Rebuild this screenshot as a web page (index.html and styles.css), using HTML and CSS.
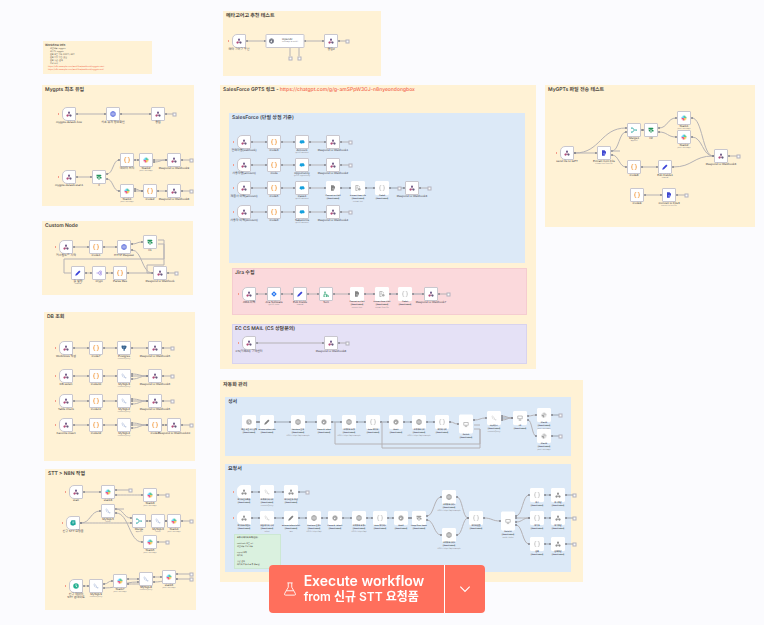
FILE: index.html
```
<!DOCTYPE html>
<html lang="ko">
<head>
<meta charset="utf-8">
<title>Workflow</title>
<link rel="stylesheet" href="styles.css">
</head>
<body>
<svg class="sprite" aria-hidden="true">
  <symbol id="webhook" viewBox="0 0 24 24"><path d="M12 6 7 17M12 6l5 11M7 18h10" stroke="#95557b" stroke-width="2" fill="none"/><circle cx="12" cy="6" r="4" fill="#6b5b88"/><circle cx="6" cy="18" r="4.500" fill="#b34b79"/><circle cx="18" cy="18" r="4.500" fill="#645a7d"/></symbol>
  <symbol id="code" viewBox="0 0 24 24"><path d="M9 1H7Q4 1 4 6v3q0 3-3 3 3 0 3 3v3q0 5 3 5h2M15 1h2q3 0 3 5v3q0 3 3 3-3 0-3 3v3q0 5-3 5h-2" stroke="#f0922c" stroke-width="3" fill="none"/></symbol>
  <symbol id="http" viewBox="0 0 24 24"><g fill="none" stroke="#4c5fd9" stroke-width="2.500"><circle cx="12" cy="12" r="10"/><ellipse cx="12" cy="12" rx="4.500" ry="10"/><path d="M3 8h18M3 16h18"/></g></symbol>
  <symbol id="slack" viewBox="0 0 24 24"><g stroke-width="4.500" stroke-linecap="round"><path d="M9 4v6" stroke="#36c5f0"/><path d="M4 9h1" stroke="#36c5f0"/><path d="M14 9h6M15 4v1" stroke="#2eb67d"/><path d="M15 14v6M20 15h-1" stroke="#ecb22e"/><path d="M4 15h6M9 20v-1" stroke="#e01e5a"/></g></symbol>
  <symbol id="if" viewBox="0 0 24 24"><path d="M2 3h17l3 3-3 4H2zM22 12H5l-3 3 3 3h17zM10 10h4v13h-4z" fill="#23935a"/></symbol>
  <symbol id="mysql" viewBox="0 0 24 24"><path d="M3 5q4-3 7 2l4 8q3 4 7 4l-4 2M4 6l3 9 3 2M14 15l1 5" fill="none" stroke="#7b93c4" stroke-width="1.500"/></symbol>
  <symbol id="postgres" viewBox="0 0 24 24"><path d="M2 3q5-2 9 0 6-2 11 1 1 5-3 11l-4 1v7h-5v-8l-4 1Q1 10 2 3z" fill="#2f5e8c"/><path d="M9 6v6l3 2M15 6v6" stroke="#fff" fill="none"/></symbol>
  <symbol id="salesforce" viewBox="0 0 24 24"><path d="M4 9a5 5 0 0 1 8-3 5 5 0 0 1 8 2 5 5 0 0 1-1 9h-6a5 5 0 0 1-7 0 5 5 0 0 1-2-8z" fill="#16a0dd"/></symbol>
  <symbol id="jira" viewBox="0 0 24 24"><path d="m12 1 11 11-11 11L1 12z" fill="#2878f0"/><path d="m12 8 4 4-4 4-4-4z" fill="#fff"/></symbol>
  <symbol id="edit" viewBox="0 0 24 24"><path d="m1 23 2-7L17 2l5 5L8 21z" fill="#3a42d8"/></symbol>
  <symbol id="merge" viewBox="0 0 24 24"><path d="M2 4h5l6 8h9M2 20h5l6-8" fill="none" stroke="#2aa5a0" stroke-width="3"/><circle cx="3" cy="4" r="2.500" fill="#2aa5a0"/><circle cx="3" cy="20" r="2.500" fill="#2aa5a0"/><circle cx="21" cy="12" r="2.500" fill="#2aa5a0"/></symbol>
  <symbol id="file" viewBox="0 0 24 24"><path d="M4 1h10l6 6v7h-5v9H4z" fill="#3f48cf"/><path d="M8 12h6v-3l6 6-6 6v-3H8z" fill="#6f77e6"/></symbol>
  <symbol id="filter" viewBox="0 0 24 24"><path d="M3 2h10l4 4v4M3 2v20h7M6 8h6M6 12h5M6 16h4" fill="none" stroke="#777" stroke-width="2.500"/><circle cx="17" cy="17" r="5" fill="#888"/></symbol>
  <symbol id="switch" viewBox="0 0 24 24"><path d="M2 12h7M9 12l6-8h6v16h-6z" fill="none" stroke="#8d78df" stroke-width="2.500"/><circle cx="17" cy="12" r="3" fill="#8d78df"/></symbol>
  <symbol id="screen" viewBox="0 0 24 24"><path d="M3 4h18v11H3zM7 21h10M12 15v6" fill="none" stroke="#777" stroke-width="2.500"/></symbol>
  <symbol id="agent" viewBox="0 0 24 24"><path d="M8 8v5H4v8M8 13h6v8M14 16h6v5" fill="none" stroke="#26a06e" stroke-width="2.500"/><circle cx="8" cy="5" r="3" fill="#26a06e"/><path d="M2 19h5v4H2zM11 19h5v4h-5zM18 19h5v4h-5z" fill="#26a06e"/></symbol>
  <symbol id="chat" viewBox="0 0 24 24"><path d="M6 1h15l2 17-11 5-9-3-2-9z" fill="#1ca69a"/><path d="M9 8h9M9 12h7" stroke="#fff" stroke-width="2"/></symbol>
  <symbol id="clock" viewBox="0 0 24 24"><circle cx="12" cy="12" r="11" fill="#23b08f"/><path d="M12 5v8l5 3" fill="none" stroke="#fff" stroke-width="3"/></symbol>
  <symbol id="openai" viewBox="0 0 24 24"><g fill="none" stroke="#4c5060" stroke-width="2.500"><circle cx="12" cy="12" r="9"/><path d="m7 7 10 3v7l-5 3-6-4zM6 13l6-8 6 4-5 10"/></g></symbol>
</svg>

<main class="canvas" id="canvas"></main>

<div class="run-bar">
  <div class="run-group">
    <button class="run-main" type="button">
      <svg class="flask" viewBox="0 0 16 16" aria-hidden="true"><path d="M5 1h6M6 1v5L2 13q-1 2 1 2h10q2 0 1-2L10 6V1M4 10h8"/></svg>
      <span class="run-text"><span class="run-title">Execute workflow</span><span class="run-source">from 신규 STT 요청품</span></span>
    </button>
    <button class="run-more" type="button" aria-label="Choose trigger">
      <svg class="chevron" viewBox="0 0 12 12" aria-hidden="true"><path d="m2 4 4 4 4-4"/></svg>
    </button>
  </div>
</div>
<script src="canvas.js"></script>
</body>
</html>
```
FILE: styles.css
```
* { box-sizing: border-box; }
body {
  margin: 0;
  background: #fbfbfe;
  font-family: Inter, "Noto Sans CJK KR", sans-serif;
  text-rendering: geometricPrecision;
}
.sprite { display: none; }
.canvas { position: relative; height: 100vh; overflow: hidden; }

.note {
  position: absolute;
  padding: 2px 3px;
  background: #fff2d5;
  color: #4a453d;
  font-size: 5px;
  line-height: 7px;
}
.note h2 { margin: 0; font-size: 5px; font-weight: 600; white-space: nowrap; }
.note a { color: #f2694f; font-weight: 500; text-decoration: none; }
.note.blue { background: #dce9f7; color: #3f4854; }
.note.pink { background: #fbd9dc; border: 1px solid #f5ccd0; padding: 1px 2px; }
.note.purple { background: #e5e1f6; border: 1px solid #d8d3ee; padding: 1px 2px; }
.note.green { background: #daf1df; border: 1px solid #cce8d3; padding: 1px 2px; }
.note.info, .note.green { font-size: 2px; line-height: 3px; }
.note.info { padding: 2px; }
.note.info h2, .note.green h2 { font-size: 3px; line-height: 4px; }
.note.green h2 { font-size: 2px; }
.note ul { margin: 0; padding: 1px 0 0 5px; }
.note p { margin: 3px 0 0; white-space: nowrap; }
.note .links { display: grid; margin: 0 0 0 3px; }

.edges { position: absolute; width: 100%; height: 100%; overflow: visible; fill: none; stroke: #b5b2b5; stroke-width: 1; }
.edges .faint { stroke: #9ba4af; }
.edges .dot { fill: #85868e; stroke: none; }
.edges .end { fill: #fafafa; stroke: #b3b2bd; }

.node {
  position: absolute;
  display: grid;
  place-items: center;
  width: 14px;
  height: 14px;
  border: 1px solid #c9c7ce;
  border-radius: 1px;
  background: #fff;
  transform: translate(-50%, -50%);
}
.node .icon { width: 6px; height: 6px; }
.node.trigger { border-radius: 5px 1px 1px 5px; }
.node.trigger::before { content: ""; position: absolute; left: -5px; width: 1px; height: 2px; background: #f49a88; }
.node.off { border-color: #fff; }
.node.off .icon { filter: grayscale(1); opacity: .7; }
.node.tall { height: 19px; }
.node.wide { width: 39px; grid-template-columns: 10px 1fr; }
.node.wide .label { position: static; margin: 0; transform: none; text-align: left; }
.label {
  position: absolute;
  top: 100%;
  left: 50%;
  margin-top: 1px;
  transform: translateX(-50%);
  color: #45434a;
  font: 3px/3px "Liberation Sans", "Noto Sans CJK KR", sans-serif;
  text-align: center;
  white-space: nowrap;
}
.off .label { font-size: 2px; font-weight: 700; color: #4c515b; }
.label span { display: block; }
.label .sub { color: #8d8b91; font-size: 2px; font-weight: 400; }

.run-bar {
  position: fixed;
  inset: auto 0 12px 0;
  display: flex;
  justify-content: center;
  padding-right: 10px;
  pointer-events: none;
}
.run-group { display: flex; gap: 1px; border-radius: 4px; overflow: hidden; background: #fff; pointer-events: auto; }
.run-group button { height: 48px; border: 0; background: #ff6f5c; color: #fff; font-family: inherit; }
.run-main { display: flex; align-items: center; gap: 7px; padding: 0 20px 0 14px; }
.run-more { display: grid; place-items: center; width: 40px; padding: 0; }
.run-text { display: grid; text-align: left; font-weight: 600; line-height: 16px; }
.run-title { font-size: 14px; }
.run-source { font-size: 12px; }
.flask { width: 14px; height: 16px; fill: none; stroke: #fff; stroke-width: 1; }
.chevron { width: 14px; height: 14px; fill: none; stroke: #fff; stroke-width: 1; }
```
FILE: canvas.js
```
const notes = [
  [43, 41, 109, 33, 'info', '<h2>Workflow Info</h2><ul><li>작업내용: mygpts</li><li>작성자: mygpts</li><li>웹훅 호출 방식: POST / GET</li><li>웹훅 인증 방법: 없음</li><li>웹훅 응답: 결과</li><li>관련 문서</li></ul><div class="links"><a href="#">https://n8n.example.com/workflow/webhook/mygpts-start</a><a href="#">https://n8n.example.com/workflow/webhook/mygpts-end</a></div>'],
  [42, 85, 152, 121, '', '<h2>Mygpts 최초 유입</h2>'],
  [42, 221, 151, 74, '', '<h2>Custom Node</h2>'],
  [44, 312, 151, 149, '', '<h2>DB 조회</h2>'],
  [45, 469, 151, 141, '', '<h2>STT &gt; N8N 작업</h2>'],
  [223, 11, 158, 65, '', '<h2>메타고어고 추천 테스트</h2>'],
  [220, 85, 316, 284, '', '<h2>SalesForce GPTS 링크 - <a href="#">https://chatgpt.com/g/g-amSPpW3GJ-n8nyeondongbox</a></h2>'],
  [229, 113, 296, 150, 'blue', '<h2>SalesForce (단월 상점 기준)</h2>'],
  [232, 268, 295, 47, 'pink', '<h2>Jira 수집</h2>'],
  [232, 324, 295, 40, 'purple', '<h2>EC CS MAIL (CS 상담문의)</h2>'],
  [545, 85, 210, 142, '', '<h2>MyGPTs 파일 전송 테스트</h2>'],
  [220, 380, 363, 202, '', '<h2>자동화 관리</h2>'],
  [225, 397, 346, 59, 'blue', '<h2>성서</h2>'],
  [225, 464, 346, 108, 'blue', '<h2>요청서</h2>'],
  [234, 534, 47, 35, 'green', '<h2>요청서 데이터 조회(신규)</h2><p>webhook 호출 url<br>작업내용 관련 내용</p><p>mysql 조회<br>데이터</p><p>응답 결과<br>데이터 전송 완료 후 종료됨</p>'],
];

// Each row: y, nodes [icon, x, label, sub, classes], x of the closing "+" box.
const rows = [
  [114, [['webhook', 69, 'mygpts-default-flow', '', 'trigger'], ['http', 113, '최초 유저 정보확인'], ['webhook', 158, '응답']], 174],
  [160, [['code', 127, '데이터 처리'], ['slack', 146, 'Slack2', 'post: message'], ['webhook', 174, 'Respond to Webhook9']], 191],
  [177, [['webhook', 69, 'mygpts-default-start1', '', 'trigger'], ['if', 99, 'If']]],
  [191, [['slack', 127, 'Slack1', 'post: message'], ['code', 150, 'Code2'], ['webhook', 174, 'Respond to Webhook8']], 191],
  [247, [['webhook', 66, '커스텀노드 시작', '', 'trigger'], ['code', 96, 'Code1'], ['http', 124, 'HTTP Request']]],
  [242, [['if', 150, 'If1']]],
  [273, [['edit', 78, '값 설정', 'manual'], ['switch', 99, 'Crypt'], ['code', 120, 'Parse Res'], ['webhook', 160, 'Respond to Webhook']], 176],
  [348, [['webhook', 66, 'Workflows 작업', '', 'trigger'], ['code', 96, 'Code7'], ['postgres', 124, 'Postgres', 'executeQuery'], ['webhook', 155, 'Respond to Webhook5']], 172],
  [376, [['webhook', 66, 'DB select', '', 'trigger'], ['code', 96, 'Code10'], ['mysql', 124, 'MySQL3', 'executeQuery'], ['webhook', 155, 'Respond to Webhook6']], 172],
  [401, [['webhook', 66, 'Table check', '', 'trigger'], ['code', 96, 'Code11'], ['mysql', 124, 'MySQL2', 'executeQuery'], ['webhook', 155, 'Respond to Webhook5']], 172],
  [425, [['webhook', 66, 'Favorite insert', '', 'trigger'], ['code', 96, 'Code12'], ['mysql', 124, 'MySQL4', 'executeQuery'], ['code', 155, 'Code7'], ['webhook', 174, 'Respond to Webhook10']], 191],
  [492, [['webhook', 76, 'start', '', 'trigger'], ['slack', 108, 'slack3']]],
  [495, [['slack', 150, 'Slack3', 'post: message']], 167],
  [511, [['mysql', 108, 'MySQL5', 'select']]],
  [523, [['chat', 73, '신규 STT 요청품', '', 'trigger']]],
  [521, [['merge', 139, 'Merge', 'append'], ['mysql', 158, 'MySQL6', 'select'], ['slack', 174, 'Slack4', 'post: message']], 191],
  [542, [['slack', 150, 'Slack5', 'post: message']], 167],
  [586, [['clock', 76, '신규 데이터<br>STT 업데이트', '', 'trigger'], ['mysql', 96, 'MySQL9', 'executeQuery']]],
  [581, [['slack', 120, 'Slack7', 'post: message']]],
  [579, [['mysql', 146, 'MySQL8', 'executeQuery']]],
  [577, [['slack', 169, 'slack6', 'post: message']]],
  [41, [['webhook', 239, '메타 고어고 추천', '', 'trigger'], ['openai', 285, 'OpenAI', 'message a model', 'wide'], ['webhook', 331, '응답2']], 347],
  [142, [['webhook', 244, '판매자명(webhook)', '', 'trigger'], ['code', 274, 'Code3'], ['salesforce', 302, 'Account', 'getAll: account'], ['webhook', 333, 'Respond to Webhook1']], 350],
  [165, [['webhook', 244, '사용자명(account)', '', 'trigger'], ['code', 274, 'Code'], ['salesforce', 302, 'Opportunity', 'getAll: opportunity'], ['webhook', 333, 'Respond to Webhook2']], 350],
  [188, [['webhook', 244, '제품사 이력(account)', '', 'trigger'], ['code', 274, 'Code5'], ['salesforce', 302, 'Case1', 'getAll: account'], ['file', 333, 'Convert to File2', '', 'off'], ['filter', 358, 'Extract from File', 'extract text', 'off'], ['code', 382, 'Code8', '', 'off'], ['webhook', 412, 'Respond to Webhook3']], 429],
  [212, [['webhook', 244, '사용자 이력(Account)', '', 'trigger'], ['code', 274, 'Code6'], ['salesforce', 302, 'Salesforce', 'getAll: account'], ['webhook', 333, 'Respond to Webhook4']], 350],
  [294, [['webhook', 249, 'JIRA 이력', '', 'trigger'], ['jira', 274, 'Jira Software', 'getAll: issue'], ['edit', 300, 'Edit Fields', 'manual'], ['agent', 326, 'Sort'], ['file', 357, 'Convert to File1', 'convert text', 'off'], ['filter', 382, 'Extract from File1', 'extract from file', 'off'], ['code', 405, 'Code4', '', 'off'], ['webhook', 431, 'Respond to Webhook7']], 448],
  [343, [['webhook', 249, 'CS(카페24) 고객센터', '', 'trigger'], ['webhook', 331, 'Respond to Webhook8']], 347],
  [153, [['webhook', 567, 'send file to GPT', '', 'trigger'], ['file', 604, 'Extract from File', 'extract text from file']]],
  [130, [['merge', 634, 'Merge1', 'append'], ['if', 651, 'If2']]],
  [118, [['slack', 684, 'Slack1', 'post: message']]],
  [137, [['slack', 684, 'Slack2', 'post: message']]],
  [167, [['code', 634, 'Code8'], ['edit', 665, 'Edit Fields1', 'manual']]],
  [156, [['webhook', 721, 'Respond to Webhook3']], 738],
  [195, [['code', 637, 'Code9'], ['file', 669, 'Convert to File3', 'convert to text file']], 686],
  [422, [['clock', 249, '매일 오전 9시 실행', '', 'off'], ['edit', 267, 'access-token-info', '', 'off'], ['http', 298, 'Retrieve 인증', 'POST: https://api.example', 'off'], ['openai', 324, 'Parse & Token', '', 'off'], ['http', 349, '고객정보 요청', 'POST: https://api.example', 'off'], ['code', 373, 'Auto 데이터', '', 'off'], ['openai', 396, 'Wait1', '', 'off'], ['http', 419, '고객정보처리', 'POST: https://api.example', 'off'], ['code', 442, '데이터처리', '', 'off']]],
  [424, [['screen', 466, 'Switch', '', 'off tall']]],
  [418, [['mysql', 494, 'MySQL7', 'executeQuery', 'off'], ['screen', 520, 'If3', '', 'off']]],
  [415, [['slack', 544, 'Slack6', 'post: message', 'off']], 560],
  [436, [['slack', 544, 'Slack8', 'post: message', 'off']], 560],
  [492, [['webhook', 244, '데이터검증호출', '', 'off trigger'], ['mysql', 267, '조회데이터처리', 'executeQuery', 'off'], ['webhook', 291, '데이터검증 응답', '', 'off']], 307],
  [518, [['webhook', 244, '데이터요청접수', '', 'off trigger'], ['mysql', 267, '상품데이터 처리', 'select', 'off'], ['edit', 291, 'access-token-info1', 'raw', 'off'], ['http', 314, 'Retrieve 인증1', 'POST: https://api', 'off'], ['openai', 335, 'Parse & Token1', '', 'off'], ['http', 359, '고객정보 요청1', 'POST: https://api', 'off'], ['code', 380, 'Auto 데이터1', '', 'off'], ['openai', 401, 'Wait2', '', 'off'], ['if', 419, 'Loop Over Items', '', 'off']]],
  [497, [['http', 449, '고객정보처리1', 'POST: https://api.example', 'off']]],
  [535, [['http', 449, '고객정보처리2', 'POST: https://api.example', 'off']]],
  [518, [['code', 476, '데이터변환', '', 'off']]],
  [521, [['screen', 508, 'Switch1', 'mode: Rules', 'off tall']]],
  [495, [['code', 537, '성공', '', 'off'], ['webhook', 558, '성공응답', '', 'off']], 574],
  [518, [['code', 537, '대기중', '', 'off'], ['webhook', 558, '대기응답', '', 'off']], 574],
  [544, [['code', 537, '실패', '', 'off'], ['webhook', 558, '실패응답', '', 'off']], 574],
];

// Links that leave their row: x1, y1, x2, y2.
const links = [
  [107, 174, 119, 160], [107, 179, 119, 191], [154, 162, 166, 160], [135, 189, 142, 191],
  [132, 244, 142, 242], [132, 250, 152, 273],
  [132, 374, 147, 376], [132, 379, 147, 376], [132, 399, 147, 401], [132, 404, 147, 401], [132, 423, 147, 425], [132, 428, 147, 425],
  [116, 495, 142, 495], [81, 523, 100, 511], [81, 523, 131, 523], [116, 509, 131, 518], [116, 513, 142, 542],
  [104, 584, 112, 581], [104, 588, 138, 582], [128, 579, 138, 579], [128, 584, 140, 584], [154, 577, 161, 577], [154, 582, 176, 579],
  [575, 153, 626, 128], [612, 151, 626, 132], [612, 155, 626, 167], [659, 128, 676, 118], [659, 132, 676, 137], [692, 118, 713, 156], [692, 137, 713, 156], [673, 167, 713, 156],
  [450, 422, 458, 424], [474, 420, 486, 418], [502, 416, 512, 418], [502, 420, 512, 418], [528, 416, 536, 415], [528, 420, 536, 436],
  [427, 516, 441, 497], [427, 520, 441, 535], [457, 497, 468, 518], [457, 535, 468, 518], [484, 518, 500, 521],
  [516, 516, 529, 495], [516, 518, 529, 518], [516, 522, 529, 518], [516, 525, 529, 544],
];

// Open outputs: x1, y, x of the "+" box.
const stubs = [[116, 490, 130], [177, 574, 191], [177, 579, 191]];

// Loops drawn with square corners.
const loops = [
  'M158 240H164V259H64V273H71', 'M158 244H164V265H147V273H152', 'M290 48V56', 'M299 48V56',
  'M335 422V444H480V429H474', 'M382 422V448H480V429', 'M116 509H124', 'M474 425H480', 'M612 151H620',
];

let edges = '';
let boxes = '';
const dot = (x, y) => `<circle class="dot" cx="${x}" cy="${y}" r="1"/>`;
const end = (x, y) => `<rect class="end" x="${x - 1}" y="${y - 1}" width="3" height="3"/>`;
const half = node => (node[4] || '').includes('wide') ? 20 : 8;

for (const [y, nodes, last] of rows) {
  nodes.forEach((node, i) => {
    const [icon, x, label, sub = '', kind = ''] = node;
    const next = nodes[i + 1];
    const tone = kind.includes('off') ? 'faint' : '';
    if (next) {
      const a = x + half(node);
      const b = next[1] - half(next);
      edges += `<path class="${tone}" d="M${a} ${y}H${b}"/>${dot(a, y)}${dot(b, y)}`;
    } else if (last) {
      edges += `<path class="${tone}" d="M${x + half(node)} ${y}H${last - 1}"/>${dot(x + half(node), y)}${end(last, y)}`;
    }
    const off = kind.includes('off') ? '<span>(Deactivated)</span>' : '';
    boxes += `<div class="node ${kind}" style="left:${x}px;top:${y}px"><svg class="icon"><use href="#${icon}"/></svg><div class="label"><span>${label}</span>${off}<span class="sub">${sub}</span></div></div>`;
  });
}
for (const [a, b, c, d] of links) {
  const m = (a + c) / 2;
  edges += `<path d="M${a} ${b}C${m} ${b} ${m} ${d} ${c} ${d}"/>${dot(a, b)}${dot(c, d)}`;
}
for (const [a, y, b] of stubs) edges += `<path d="M${a} ${y}H${b}"/>${dot(a, y)}${end(b, y)}`;
for (const d of loops) edges += `<path d="${d}"/>`;
edges += end(290, 58) + end(299, 58) + end(142, 584) + end(399, 188);

document.getElementById('canvas').innerHTML =
  notes.map(([x, y, w, h, tone, body]) => `<section class="note ${tone}" style="left:${x}px;top:${y}px;width:${w}px;height:${h}px">${body}</section>`).join('') +
  `<svg class="edges">${edges}</svg>` + boxes;
```
